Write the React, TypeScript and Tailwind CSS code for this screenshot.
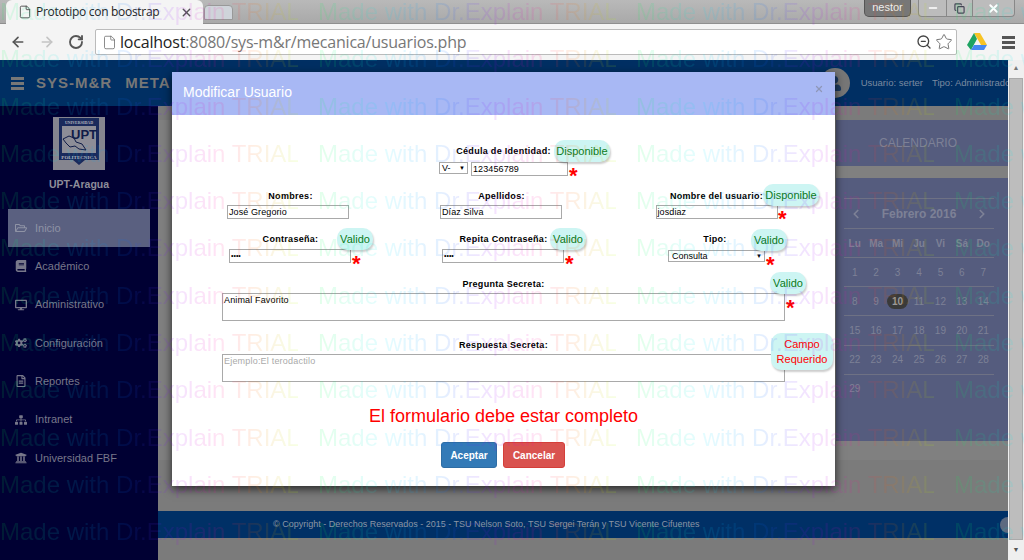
import { ArrowLeft, ArrowRight, ChevronLeft, ChevronRight, Copy, File, Minus, RotateCw, Star, X, ZoomOut } from 'lucide-react';
import { FaBook, FaCogs, FaDesktop, FaRegFileAlt, FaRegFolderOpen, FaSitemap, FaUniversity, FaUser } from 'react-icons/fa';

const rows = Array.from({ length: 12 });
const cols = Array.from({ length: 4 });

function Watermark() {
  return (
    <div className="pointer-events-none absolute inset-0 overflow-hidden z-50 font-['Liberation_Sans',sans-serif]">
      <div className="flex flex-col gap-[19.3px] -mt-[2px]">
        {rows.map((_, r) => (
          <div key={r} className="flex gap-[20px] h-[28px] w-[1300px]">
            {cols.map((_, c) => (
              <span
                key={c}
                className="w-[298px] shrink-0 whitespace-nowrap text-[24px] leading-[28px] text-transparent bg-clip-text bg-[linear-gradient(90deg,rgba(0,255,70,0.11),rgba(0,230,255,0.11)_22%,rgba(0,110,255,0.11)_42%,rgba(150,0,255,0.11)_58%,rgba(255,0,170,0.11)_72%,rgba(255,90,0,0.11)_84%,rgba(180,255,0,0.11))]"
              >
                Made with Dr.Explain TRIAL
              </span>
            ))}
          </div>
        ))}
      </div>
    </div>
  );
}

function BrowserChrome() {
  return (
    <div className="h-[60px] shrink-0 flex flex-col font-['Liberation_Sans',sans-serif]">
      <div className="h-[24px] flex bg-[linear-gradient(180deg,#b9b9b9,#a9a9a9)] border-b border-[#8f8f8f]">
        <div className="ml-[6px] w-[197px] h-[24px] bg-[#f4f4f4] rounded-t-[6px] flex items-center pl-[12px] pr-[10px] gap-[4px]">
          <File size={14} strokeWidth={1.5} className="text-[#444]" />
          <span className="text-[12px] text-[#222] font-['Open_Sans',sans-serif] tracking-[-0.3px] flex-1 whitespace-nowrap">Prototipo con boostrap</span>
          <X size={13} strokeWidth={2.5} className="text-[#555]" />
        </div>
        <div className="ml-[1px] mt-[5px] w-[29px] h-[15px] bg-[#cfd4da] rounded-t-[4px] border border-[#999]"></div>
        <div className="ml-auto flex items-start gap-[7px] mr-[9px]">
          <div className="w-[47px] h-[17px] bg-[#777] rounded-b-[5px] border border-[#555] border-t-0 text-[#eee] text-[11px] leading-[15px] text-center">nestor</div>
          <div className="flex h-[17px] bg-[#bcbcbc] rounded-b-[4px] border border-[#888] border-t-0">
            <div className="w-[28px] flex items-center justify-center border-r border-[#888]"><Minus size={12} strokeWidth={3} className="text-white" /></div>
            <div className="w-[26px] flex items-center justify-center border-r border-[#888]"><Copy size={11} strokeWidth={2.5} className="text-[#445]" /></div>
            <div className="w-[41px] flex items-center justify-center"><X size={13} strokeWidth={3.5} className="text-white" /></div>
          </div>
        </div>
      </div>
      <div className="flex-1 bg-[#f4f4f4] flex items-center pl-[10px] pr-[9px]">
        <ArrowLeft size={16} strokeWidth={2.5} className="text-[#555]" />
        <ArrowRight size={16} strokeWidth={2.5} className="text-[#c4c4c4] ml-[13px]" />
        <RotateCw size={16} strokeWidth={2.8} className="text-[#555] ml-[13px]" />
        <div className="ml-[11px] w-[862px] h-[26px] bg-white border border-[#bbb] rounded-[2px] flex items-center px-[3px]">
          <File size={15} strokeWidth={1.2} className="ml-[3px] text-[#666]" />
          <span className="ml-[3px] text-[16px] font-['Open_Sans',sans-serif] text-[#222] tracking-[-0.2px]">localhost<span className="text-[#777]">:8080/sys-m&amp;r/mecanica/usuarios.php</span></span>
          <ZoomOut size={16} strokeWidth={2} className="ml-auto text-[#444]" />
          <Star size={18} strokeWidth={1.2} className="ml-[3px] text-[#666]" />
        </div>
        <svg width="20" height="18" viewBox="0 0 20 18" className="ml-[10px]">
          <path d="M7 0h6l7 12h-6z" fill="#f7c325" />
          <path d="M7 0l3 6-6 11-4-5z" fill="#1ea362" />
          <path d="M4 17l3-5h13l-3 5z" fill="#4688f1" />
        </svg>
        <div className="ml-auto flex flex-col gap-[2px]">
          <div className="w-[13px] h-[3px] bg-[#555]"></div>
          <div className="w-[13px] h-[3px] bg-[#555]"></div>
          <div className="w-[13px] h-[3px] bg-[#555]"></div>
        </div>
      </div>
    </div>
  );
}

const menu = [
  { icon: FaRegFolderOpen, label: 'Inicio', active: true },
  { icon: FaBook, label: 'Académico' },
  { icon: FaDesktop, label: 'Administrativo' },
  { icon: FaCogs, label: 'Configuración' },
  { icon: FaRegFileAlt, label: 'Reportes' },
  { icon: FaSitemap, label: 'Intranet' },
  { icon: FaUniversity, label: 'Universidad FBF' },
];

function Logo() {
  return (
    <svg width="52" height="53" viewBox="0 0 52 53" className="bg-[#85858f]">
      <path d="M6 1h40v42h-14l-6 5-6-5H6z" fill="#1a2a5c" />
      <rect x="9" y="9" width="34" height="27" fill="#8d8d97" />
      <text x="26" y="7" textAnchor="middle" fontSize="4" fontWeight="700" fill="#b5b5bd" fontFamily="Liberation Serif, serif">UNIVERSIDAD</text>
      <text x="31" y="22" textAnchor="middle" fontSize="13" fontWeight="700" fill="#101c48" fontFamily="Liberation Sans, sans-serif">UPT</text>
      <path d="M10 22l6-3 5 2 2 4 6 2 4 6-7-1-4-3-5 1-4-4z" fill="none" stroke="#101c48" strokeWidth="1" />
      <text x="26" y="42" textAnchor="middle" fontSize="5" fontWeight="700" fill="#b5b5bd" fontFamily="Liberation Serif, serif">POLITECNICA</text>
    </svg>
  );
}

function Sidebar() {
  return (
    <aside className="w-[158px] shrink-0 bg-[#000033] flex flex-col items-center pt-[11px]">
      <Logo />
      <div className="mt-[8px] text-[10.5px] leading-[12px] font-bold text-[#8d8d99]">UPT-Aragua</div>
      <nav className="mt-[19px] w-full flex flex-col">
        {menu.map((m) => (
          <div
            key={m.label}
            className={`flex items-center h-[38.3px] gap-[8px] text-[11px] ${m.active ? 'mx-[8px] pl-[7px] bg-[#5a6080] text-[#8f93a5]' : 'pl-[15px] text-[#77778a]'}`}
          >
            <m.icon size={12} />
            <span>{m.label}</span>
          </div>
        ))}
      </nav>
    </aside>
  );
}

const days = [
  ['1', '2', '3', '4', '5', '6', '7'],
  ['8', '9', '10', '11', '12', '13', '14'],
  ['15', '16', '17', '18', '19', '20', '21'],
  ['22', '23', '24', '25', '26', '27', '28'],
  ['29', '', '', '', '', '', ''],
];

function Calendar() {
  return (
    <div className="ml-auto w-[172px] flex flex-col text-[#7d8196]">
      <div className="h-[46px] bg-[#555c7e] flex items-center justify-center pr-[8px] text-[12px]">CALENDARIO</div>
      <div className="h-[12px]"></div>
      <div className="bg-[#555c7e] h-[263px] pl-[8px] pr-[14px] pt-[20px]">
        <div className="h-[30px] border-t border-[#6e7184] flex items-center justify-between px-[5px]">
          <ChevronLeft size={14} strokeWidth={3} />
          <span className="text-[12px] font-bold">Febrero 2016</span>
          <ChevronRight size={14} strokeWidth={3} />
        </div>
        <div className="grid grid-cols-7 h-[29px] items-center text-center text-[10px] font-bold border-t border-[#6e7184]">
          {['Lu', 'Ma', 'Mi', 'Ju', 'Vi', 'Sá', 'Do'].map((d) => <span key={d}>{d}</span>)}
        </div>
        {days.map((w) => (
          <div key={w[0]} className="grid grid-cols-7 h-[29.2px] items-center text-center text-[10px] border-t border-[#6e7184]">
            {w.map((d, i) => (
              <span key={i} className={d === '10' ? 'mx-auto w-[21px] rounded-full bg-[#3a3a3a] font-bold text-[#999]' : ''}>{d}</span>
            ))}
          </div>
        ))}
      </div>
    </div>
  );
}

function Background() {
  return (
    <div className="flex-1 flex flex-col min-h-0 font-['Liberation_Sans',sans-serif]">
      <div className="h-[46px] shrink-0 bg-[#002f63] flex items-center pl-[11px]">
        <div className="flex flex-col gap-[2px]">
          <div className="w-[13px] h-[3px] bg-[#777]"></div>
          <div className="w-[13px] h-[3px] bg-[#777]"></div>
          <div className="w-[13px] h-[3px] bg-[#777]"></div>
        </div>
        <span className="ml-[12px] text-[15px] font-bold tracking-[1px] text-[#777]">SYS-M&amp;R</span>
        <span className="ml-[13px] text-[15px] font-bold tracking-[1px] text-[#777]">META</span>
        <div className="ml-auto flex items-center">
          <div className="w-[30px] h-[30px] rounded-full bg-[#777] flex items-center justify-center text-[#1d3c64]"><FaUser size={15} /></div>
          <span className="ml-[11px] text-[9.5px] text-[#7a8aa0]">Usuario: serter</span>
          <span className="ml-[9px] text-[9.5px] text-[#7a8aa0] whitespace-nowrap w-[76px] overflow-hidden">Tipo: Administrador</span>
        </div>
      </div>
      <div className="flex-1 flex min-h-0">
        <Sidebar />
        <main className="flex-1 bg-[#7b7b7b] flex flex-col">
          <div className="h-[14px] shrink-0"></div>
          <div className="flex h-[340px] bg-[#808080]"><Calendar /></div>
          <div className="h-[51px] shrink-0"></div>
          <footer className="relative h-[27px] shrink-0 bg-[#003066] overflow-hidden flex items-center pl-[115px] text-[9px] text-[#8a95a5] whitespace-nowrap">
            © Copyright - Derechos Reservados - 2015 - TSU Nelson Soto, TSU Sergei Terán y TSU Vicente Cifuentes
            <div className="absolute -right-[8px] top-[6px] w-[16px] h-[16px] rounded-full bg-[#5d6a80]"></div>
          </footer>
        </main>
      </div>
    </div>
  );
}

function Badge({ className, error, children }: { className: string; error?: boolean; children: React.ReactNode }) {
  return (
    <div className={`absolute z-10 flex items-center justify-center text-center rounded-[10px] bg-[#cdf5f3] shadow-[1px_2px_2px_rgba(0,0,0,0.2)] text-[11px] ${error ? 'text-[#f00] leading-[15px]' : 'text-[#0a7a1a]'} ${className}`}>
      {children}
    </div>
  );
}

const labelCls = "text-[9px] leading-[11px] font-bold text-black tracking-[0.3px] whitespace-nowrap";
const inputCls = "block h-[14px] border border-[#a9a9a9] bg-transparent text-[9px] leading-[12px] text-black tracking-[0.1px] pl-[1px]";
const dotsCls = "block h-[14px] border border-[#a9a9a9] text-[7px] leading-[12px] text-black pl-[1px]";

function Required({ className }: { className: string }) {
  return <span className={`absolute text-[22px] leading-[22px] font-bold text-[#f00] ${className}`}>*</span>;
}

function Modal() {
  return (
    <div className="absolute left-[172px] top-[72px] w-[663px] h-[414px] bg-white shadow-[0_3px_9px_rgba(0,0,0,0.7)] font-['Liberation_Sans',sans-serif] flex flex-col">
      <div className="h-[43px] shrink-0 bg-[#a8b8f4] flex justify-between px-[11px]">
        <span className="mt-[12px] text-[14px] leading-[16px] text-white">Modificar Usuario</span>
        <X size={10} strokeWidth={3} className="mt-[12px] text-[#8f97b8]" />
      </div>
      <div className="w-[639px] mx-auto grid grid-cols-3 pt-[31px]">
        <div></div>
        <div className="relative flex flex-col items-center h-[45px]">
          <div className={labelCls}>Cédula de Identidad:</div>
          <div className="mt-[5px] flex gap-[3px]">
            <div className="w-[29px] h-[12px] border border-[#a9a9a9] text-[9px] leading-[10px] px-[2px] flex items-center justify-between">V- <span className="text-[6px]">▼</span></div>
            <div className={`${inputCls} w-[97px] text-[#555]`}>123456789</div>
          </div>
          <Required className="left-[172px] top-[19px]" />
          <Badge className="left-[157px] -top-[6px] w-[56px] h-[22px]">Disponible</Badge>
        </div>
        <div></div>

        <div className="relative flex flex-col items-center h-[43px]">
          <div className={labelCls}>Nombres:</div>
          <div className={`${inputCls} mt-[3px] w-[122px] -ml-[5px]`}>José Gregorio</div>
        </div>
        <div className="relative flex flex-col items-center h-[43px]">
          <div className={`${labelCls} -ml-[4px]`}>Apellidos:</div>
          <div className={`${inputCls} mt-[3px] w-[122px] -ml-[5px]`}>Díaz Silva</div>
        </div>
        <div className="relative flex flex-col items-center h-[43px]">
          <div className={labelCls}>Nombre del usuario:</div>
          <div className={`${inputCls} mt-[3px] w-[122px]`}>josdiaz</div>
          <Required className="left-[168px] top-[17px]" />
          <Badge className="left-[153px] -top-[7px] w-[56px] h-[22px]">Disponible</Badge>
        </div>

        <div className="relative flex flex-col items-center h-[44px]">
          <div className={labelCls}>Contraseña:</div>
          <div className={`${dotsCls} mt-[4px] w-[122px] -ml-[1px]`}>••••</div>
          <Required className="left-[168px] top-[19px]" />
          <Badge className="left-[153px] -top-[6px] w-[36px] h-[22px]">Valido</Badge>
        </div>
        <div className="relative flex flex-col items-center h-[44px]">
          <div className={labelCls}>Repita Contraseña:</div>
          <div className={`${dotsCls} mt-[4px] w-[122px] -ml-[1px]`}>••••</div>
          <Required className="left-[168px] top-[19px]" />
          <Badge className="left-[153px] -top-[6px] w-[36px] h-[22px]">Valido</Badge>
        </div>
        <div className="relative flex flex-col items-center h-[44px]">
          <div className={`${labelCls} -ml-[3px]`}>Tipo:</div>
          <div className="mt-[5px] w-[97px] h-[12px] border border-[#a9a9a9] text-[9px] leading-[10px] pl-[3px] flex items-center justify-between pr-[2px]">Consulta <span className="text-[6px]">▼</span></div>
          <Required className="left-[156px] top-[20px]" />
          <Badge className="left-[141px] -top-[5px] w-[36px] h-[22px]">Valido</Badge>
        </div>
      </div>
      <div className="w-[563px] ml-[50px] relative flex flex-col items-center">
        <div className={`${labelCls} mt-[1px]`}>Pregunta Secreta:</div>
        <div className="mt-[3px] w-full h-[28px] border border-[#a9a9a9] text-[9px] leading-[11px] pl-[1px] pt-[1px] text-black tracking-[0.15px]">Animal Favorito</div>
        <Required className="left-[564px] top-[19px]" />
        <Badge className="left-[548px] -top-[6px] w-[36px] h-[22px]">Valido</Badge>
        <div className={`${labelCls} mt-[19px]`}>Respuesta Secreta:</div>
        <div className="mt-[3px] w-full h-[28px] border border-[#a9a9a9] text-[9px] leading-[11px] pl-[1px] pt-[1px] text-[#aaa] tracking-[0.2px]">Ejemplo:El terodactilo</div>
        <Badge error className="left-[549px] top-[55px] w-[62px] h-[37px]">Campo<br />Requerido</Badge>
      </div>
      <div className="mt-[24px] text-center text-[18px] leading-[20px] text-[#f00]">El formulario debe estar completo</div>
      <div className="mt-[16px] flex justify-center gap-[6px] -ml-[1px]">
        <button className="w-[56px] h-[26px] rounded-[3px] bg-[#337ab7] text-white text-[10px] font-bold border border-[#2e6da4]">Aceptar</button>
        <button className="w-[62px] h-[26px] rounded-[3px] bg-[#d9534f] text-white text-[10px] font-bold border border-[#d43f3a]">Cancelar</button>
      </div>
    </div>
  );
}

export default function App() {
  return (
    <div className="relative w-[1024px] h-[560px] overflow-hidden flex flex-col bg-[#777]">
      <BrowserChrome />
      <div className="flex-1 flex min-h-0">
        <Background />
        <div className="w-[16px] shrink-0 bg-[#efefef] flex flex-col items-center">
          <span className="h-[18px] text-[7px] text-[#777] leading-[16px]">▲</span>
          <div className="w-[14px] h-[462px] bg-[#bdbdbd] border border-[#aaa]"></div>
          <span className="mt-[4px] text-[7px] text-[#555] leading-[12px]">▼</span>
        </div>
      </div>
      <Modal />
      <Watermark />
    </div>
  );
}
